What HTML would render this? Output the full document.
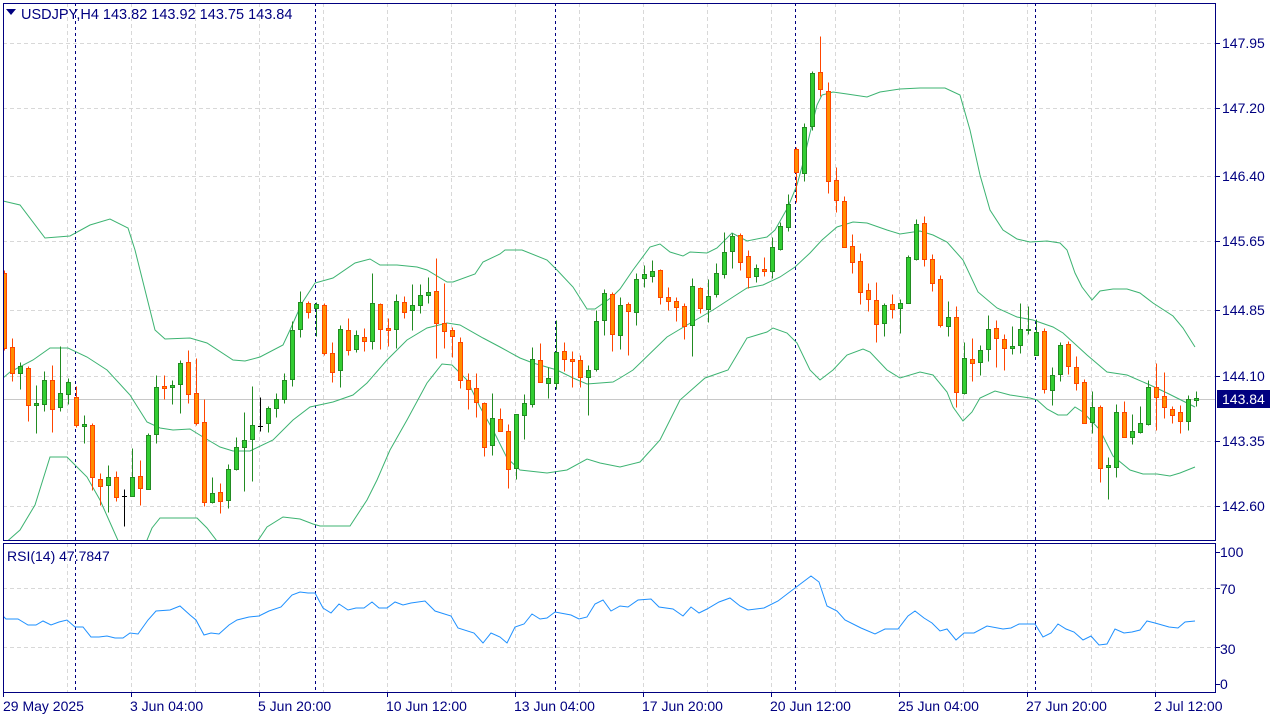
<!DOCTYPE html>
<html><head><meta charset="utf-8"><style>
html,body{margin:0;padding:0;background:#fff;width:1280px;height:720px;overflow:hidden}
svg{display:block}
text{font-family:"Liberation Sans",sans-serif;font-size:14px;fill:#000080}
.g{stroke:#228b22;fill:#32cd32;stroke-width:1}
.r{stroke:#ff4500;fill:#ff8c00;stroke-width:1}
.k{stroke:#000;fill:none;stroke-width:1}
.grid{stroke:#d8d8d8;stroke-width:1;stroke-dasharray:4 3;fill:none}
.sep{stroke:#000080;stroke-width:1;stroke-dasharray:3 3;fill:none}
.band{stroke:#3cb371;stroke-width:1;fill:none}
</style></head><body>
<svg width="1280" height="720" viewBox="0 0 1280 720" xmlns="http://www.w3.org/2000/svg">
<defs>
<clipPath id="cm"><rect x="3" y="3" width="1213" height="537"/></clipPath>
<clipPath id="cr"><rect x="3" y="543" width="1213" height="149"/></clipPath>
</defs>
<g class="grid">
<path d="M3 43.5H1216M3 108.5H1216M3 176.5H1216M3 241.5H1216M3 310.5H1216M3 376.5H1216M3 441.5H1216M3 506.5H1216"/>
<path d="M3 588.5H1216M3 647.5H1216"/>
<path d="M67.5 3V540M131.5 3V540M195.5 3V540M259.5 3V540M323.5 3V540M387.5 3V540M451.5 3V540M515.5 3V540M579.5 3V540M643.5 3V540M707.5 3V540M771.5 3V540M835.5 3V540M899.5 3V540M963.5 3V540M1027.5 3V540M1091.5 3V540M1155.5 3V540"/>
<path d="M67.5 543V692M131.5 543V692M195.5 543V692M259.5 543V692M323.5 543V692M387.5 543V692M451.5 543V692M515.5 543V692M579.5 543V692M643.5 543V692M707.5 543V692M771.5 543V692M835.5 543V692M899.5 543V692M963.5 543V692M1027.5 543V692M1091.5 543V692M1155.5 543V692"/>
</g>
<path d="M3 399.5H1216" stroke="#c8c8c8" stroke-width="1"/>
<g class="sep"><path d="M75.5 3V692M315.5 3V692M555.5 3V692M795.5 3V692M1035.5 3V692"/></g>

<g clip-path="url(#cm)">
<polyline class="band" points="3,201 20,205 45,238 70,236 90,225 110,219 128,228 135,250 155,330 165,339 190,338 207,343 233,360 245,361 260,357 283,345 290,330 302,303 315,283 333,278 355,263 370,259 380,265 397,265 417,267 427,270 447,282 453,282 475,274 483,262 500,254 505,250 522,250 547,260 557,270 573,287 587,309 595,309 612,297 620,289 633,270 650,247 660,244 670,252 683,256 690,252 707,253 717,248 732,233 747,241 767,237 775,230 788,207 797,185 803,163 810,133 817,105 822,95 833,92 847,94 867,97 880,92 900,89 920,88 945,88 960,95 970,130 980,175 990,210 1003,230 1017,239 1030,242 1047,241 1060,243 1067,250 1075,273 1082,287 1092,300 1100,291 1113,289 1127,289 1140,293 1153,303 1173,316 1183,328 1195,347"/>
<polyline class="band" points="3,378 10,372 33,360 50,348 68,348 87,357 107,370 130,395 147,422 160,428 173,430 190,429 203,437 220,447 233,451 250,451 273,440 293,420 310,407 333,402 353,395 367,383 387,360 407,340 427,328 447,323 460,325 483,338 500,347 520,358 533,363 557,370 573,378 587,384 600,383 613,382 620,378 633,370 667,337 687,325 713,310 733,297 747,288 763,285 780,277 795,267 810,253 822,240 837,227 853,222 867,223 887,230 900,234 920,231 933,235 947,242 963,260 978,292 997,308 1017,317 1033,320 1053,327 1063,333 1087,355 1107,372 1127,375 1150,385 1167,393 1195,407"/>
<polyline class="band" points="3,545 20,530 35,505 50,457 67,457 77,467 87,477 100,500 112,527 120,545 145,545 152,528 160,518 173,518 197,518 207,528 220,545 255,545 267,527 283,517 300,519 313,524 320,526 350,526 367,500 377,480 390,450 407,420 427,383 442,364 452,365 467,380 480,407 493,430 507,458 520,470 547,473 567,470 587,459 600,463 620,467 640,462 660,440 680,400 705,378 728,370 747,338 767,332 773,328 787,333 797,343 810,370 820,380 833,370 847,355 863,349 870,352 887,370 900,378 920,372 933,375 947,392 953,407 963,421 972,412 980,398 995,391 1010,395 1030,398 1037,400 1047,409 1058,415 1067,415 1075,407 1083,412 1100,430 1113,456 1130,470 1143,474 1157,474 1170,476 1180,473 1195,467"/>

<g transform="translate(0,0.5)">
<g class="g">
<path d="M20.5 362V389M36.5 385V433M44.5 371V411M60.5 346V411M68.5 378V404M84.5 415V443M108.5 465V512M132.5 448V496M148.5 433V489M156.5 375V443M172.5 380V404M180.5 360V413M212.5 477V503M228.5 464V508M236.5 437V470M244.5 412V491M252.5 386V481M268.5 406V432M276.5 393V417M284.5 373V403M292.5 321V386M300.5 291V337M316.5 302V336M340.5 325V387M356.5 330V352M372.5 273V349M396.5 294V348M412.5 284V330M420.5 284V313M428.5 277V303M492.5 393V455M516.5 414V479M524.5 394V439M532.5 347V407M548.5 367V398M556.5 320V389M588.5 365V415M596.5 310V371M604.5 289V335M620.5 297V349M636.5 273V325M644.5 265V287M652.5 260V282M692.5 278V356M708.5 279V322M716.5 263V297M724.5 232V278M732.5 233V268M756.5 264V282M772.5 237V278M780.5 222V250M788.5 194V231M804.5 123V181M812.5 71V130M884.5 303V336M900.5 299V333M908.5 255V303M916.5 219V260M948.5 301V336M964.5 342V394M980.5 345V375M988.5 315V361M1012.5 326V354M1020.5 303V353M1028.5 306V334M1036.5 319V355M1052.5 367V405M1060.5 342V381M1092.5 391V433M1108.5 457V499M1116.5 404V477M1132.5 414V444M1140.5 406V433M1148.5 380V425M1188.5 395V430M1196.5 391V406"/>
<rect x="18.5" y="366" width="4" height="7"/><rect x="34.5" y="403" width="4" height="2"/><rect x="42.5" y="380" width="4" height="24"/><rect x="58.5" y="393" width="4" height="14"/><rect x="66.5" y="382" width="4" height="12"/><rect x="82.5" y="424" width="4" height="2"/><rect x="106.5" y="477" width="4" height="8"/><rect x="130.5" y="477" width="4" height="19"/><rect x="146.5" y="435" width="4" height="54"/><rect x="154.5" y="387" width="4" height="47"/><rect x="170.5" y="385" width="4" height="2"/><rect x="178.5" y="363" width="4" height="21"/><rect x="210.5" y="493" width="4" height="9"/><rect x="226.5" y="469" width="4" height="31"/><rect x="234.5" y="447" width="4" height="22"/><rect x="242.5" y="440" width="4" height="7"/><rect x="250.5" y="425" width="4" height="14"/><rect x="266.5" y="408" width="4" height="15"/><rect x="274.5" y="399" width="4" height="9"/><rect x="282.5" y="380" width="4" height="19"/><rect x="290.5" y="330" width="4" height="49"/><rect x="298.5" y="302" width="4" height="27"/><rect x="314.5" y="304" width="4" height="4"/><rect x="338.5" y="329" width="4" height="41"/><rect x="354.5" y="335" width="4" height="14"/><rect x="370.5" y="303" width="4" height="38"/><rect x="394.5" y="301" width="4" height="28"/><rect x="410.5" y="305" width="4" height="5"/><rect x="418.5" y="295" width="4" height="10"/><rect x="426.5" y="292" width="4" height="3"/><rect x="490.5" y="418" width="4" height="27"/><rect x="514.5" y="414" width="4" height="54"/><rect x="522.5" y="403" width="4" height="12"/><rect x="530.5" y="359" width="4" height="45"/><rect x="546.5" y="378" width="4" height="5"/><rect x="554.5" y="352" width="4" height="31"/><rect x="586.5" y="370" width="4" height="7"/><rect x="594.5" y="321" width="4" height="48"/><rect x="602.5" y="293" width="4" height="27"/><rect x="618.5" y="305" width="4" height="30"/><rect x="634.5" y="279" width="4" height="33"/><rect x="642.5" y="274" width="4" height="4"/><rect x="650.5" y="271" width="4" height="5"/><rect x="690.5" y="286" width="4" height="39"/><rect x="706.5" y="296" width="4" height="13"/><rect x="714.5" y="273" width="4" height="21"/><rect x="722.5" y="252" width="4" height="22"/><rect x="730.5" y="236" width="4" height="15"/><rect x="754.5" y="268" width="4" height="8"/><rect x="770.5" y="247" width="4" height="24"/><rect x="778.5" y="226" width="4" height="23"/><rect x="786.5" y="204" width="4" height="23"/><rect x="802.5" y="127" width="4" height="46"/><rect x="810.5" y="73" width="4" height="53"/><rect x="882.5" y="305" width="4" height="18"/><rect x="898.5" y="303" width="4" height="5"/><rect x="906.5" y="257" width="4" height="46"/><rect x="914.5" y="224" width="4" height="35"/><rect x="946.5" y="317" width="4" height="9"/><rect x="962.5" y="358" width="4" height="35"/><rect x="978.5" y="350" width="4" height="12"/><rect x="986.5" y="329" width="4" height="20"/><rect x="1010.5" y="346" width="4" height="2"/><rect x="1018.5" y="329" width="4" height="16"/><rect x="1026.5" y="329" width="4" height="1"/><rect x="1034.5" y="332" width="4" height="23"/><rect x="1050.5" y="375" width="4" height="15"/><rect x="1058.5" y="345" width="4" height="29"/><rect x="1090.5" y="407" width="4" height="15"/><rect x="1106.5" y="465" width="4" height="2"/><rect x="1114.5" y="412" width="4" height="55"/><rect x="1130.5" y="431" width="4" height="6"/><rect x="1138.5" y="423" width="4" height="9"/><rect x="1146.5" y="387" width="4" height="37"/><rect x="1186.5" y="399" width="4" height="22"/><rect x="1194.5" y="398" width="4" height="2"/>
</g>
<g class="r">
<path d="M4.5 270V350M12.5 338V381M28.5 366V421M52.5 365V432M76.5 386V427M92.5 423V490M100.5 473V505M116.5 471V501M140.5 460V505M164.5 375V399M188.5 350V403M196.5 358V425M204.5 399V506M220.5 483V513M308.5 301V318M324.5 303V355M332.5 342V382M348.5 318V355M364.5 328V351M380.5 303V349M388.5 318V346M404.5 296V318M436.5 258V358M444.5 283V348M452.5 327V357M460.5 337V388M468.5 373V409M476.5 373V417M484.5 402V456M500.5 408V431M508.5 424V488M540.5 343V382M564.5 342V371M572.5 351V387M580.5 355V387M612.5 292V351M628.5 302V355M660.5 269V304M668.5 287V310M676.5 297V321M684.5 303V339M700.5 287V313M740.5 233V270M748.5 250V288M764.5 257V276M796.5 147V202M820.5 36V96M828.5 82V193M836.5 167V212M844.5 196V247M852.5 234V273M860.5 253V304M868.5 283V311M876.5 282V342M892.5 294V318M924.5 216V266M932.5 254V291M940.5 275V327M956.5 306V407M972.5 338V381M996.5 320V367M1004.5 334V370M1044.5 328V393M1068.5 341V374M1076.5 356V390M1084.5 379V423M1100.5 405V482M1124.5 401V437M1156.5 363V430M1164.5 372V418M1172.5 406V423M1180.5 405V433"/>
<rect x="2.5" y="273" width="4" height="75"/><rect x="10.5" y="347" width="4" height="26"/><rect x="26.5" y="368" width="4" height="37"/><rect x="50.5" y="380" width="4" height="29"/><rect x="74.5" y="397" width="4" height="28"/><rect x="90.5" y="425" width="4" height="52"/><rect x="98.5" y="479" width="4" height="7"/><rect x="114.5" y="477" width="4" height="20"/><rect x="138.5" y="476" width="4" height="12"/><rect x="162.5" y="386" width="4" height="2"/><rect x="186.5" y="362" width="4" height="32"/><rect x="194.5" y="393" width="4" height="30"/><rect x="202.5" y="422" width="4" height="80"/><rect x="218.5" y="492" width="4" height="9"/><rect x="306.5" y="303" width="4" height="9"/><rect x="322.5" y="305" width="4" height="48"/><rect x="330.5" y="353" width="4" height="19"/><rect x="346.5" y="330" width="4" height="20"/><rect x="362.5" y="337" width="4" height="4"/><rect x="378.5" y="304" width="4" height="25"/><rect x="386.5" y="328" width="4" height="2"/><rect x="402.5" y="302" width="4" height="10"/><rect x="434.5" y="291" width="4" height="32"/><rect x="442.5" y="323" width="4" height="8"/><rect x="450.5" y="330" width="4" height="6"/><rect x="458.5" y="342" width="4" height="38"/><rect x="466.5" y="380" width="4" height="9"/><rect x="474.5" y="388" width="4" height="14"/><rect x="482.5" y="403" width="4" height="44"/><rect x="498.5" y="419" width="4" height="12"/><rect x="506.5" y="431" width="4" height="38"/><rect x="538.5" y="360" width="4" height="22"/><rect x="562.5" y="351" width="4" height="8"/><rect x="570.5" y="359" width="4" height="2"/><rect x="578.5" y="360" width="4" height="17"/><rect x="610.5" y="294" width="4" height="40"/><rect x="626.5" y="304" width="4" height="7"/><rect x="658.5" y="270" width="4" height="27"/><rect x="666.5" y="297" width="4" height="4"/><rect x="674.5" y="301" width="4" height="6"/><rect x="682.5" y="306" width="4" height="20"/><rect x="698.5" y="288" width="4" height="20"/><rect x="738.5" y="235" width="4" height="27"/><rect x="746.5" y="256" width="4" height="21"/><rect x="762.5" y="269" width="4" height="2"/><rect x="794.5" y="149" width="4" height="23"/><rect x="818.5" y="72" width="4" height="17"/><rect x="826.5" y="91" width="4" height="90"/><rect x="834.5" y="180" width="4" height="20"/><rect x="842.5" y="201" width="4" height="46"/><rect x="850.5" y="246" width="4" height="16"/><rect x="858.5" y="261" width="4" height="31"/><rect x="866.5" y="290" width="4" height="9"/><rect x="874.5" y="300" width="4" height="24"/><rect x="890.5" y="304" width="4" height="5"/><rect x="922.5" y="223" width="4" height="36"/><rect x="930.5" y="259" width="4" height="24"/><rect x="938.5" y="279" width="4" height="46"/><rect x="954.5" y="317" width="4" height="75"/><rect x="970.5" y="359" width="4" height="4"/><rect x="994.5" y="328" width="4" height="10"/><rect x="1002.5" y="339" width="4" height="9"/><rect x="1042.5" y="331" width="4" height="58"/><rect x="1066.5" y="344" width="4" height="22"/><rect x="1074.5" y="367" width="4" height="16"/><rect x="1082.5" y="382" width="4" height="41"/><rect x="1098.5" y="407" width="4" height="61"/><rect x="1122.5" y="412" width="4" height="25"/><rect x="1154.5" y="387" width="4" height="10"/><rect x="1162.5" y="396" width="4" height="11"/><rect x="1170.5" y="409" width="4" height="6"/><rect x="1178.5" y="412" width="4" height="9"/>
</g>
<g class="k"><path d="M124.5 489V526M122 496H127M260.5 397V431M258 426H263"/></g>
</g>
</g>

<g clip-path="url(#cr)">
<polyline fill="none" stroke="#1e90ff" stroke-width="1" points="3,616 6,619 18,619 28,625 36,625 43,621 51,625 59,622 67,620 75,627 83,627 91,637 99,637 107,636 115,638 123,638 130,633 138,634 148,620 156,611 170,610 180,606 190,615 196,620 204,635 211,633 219,634 229,625 237,620 249,617 259,616 269,611 281,607 292,595 300,592 308,593 315,593 323,608 331,613 339,604 348,610 356,608 364,608 372,602 379,608 387,608 395,602 403,605 411,603 425,601 435,611 451,616 458,628 474,633 483,643 491,633 500,637 507,643 515,627 524,624 532,614 540,619 547,618 555,612 571,615 579,619 587,617 595,604 603,600 611,611 620,606 628,607 638,600 651,599 659,607 673,609 683,616 691,607 699,613 707,609 719,602 730,598 740,606 748,610 764,608 778,601 795,588 811,576 819,582 827,606 837,611 845,620 861,628 875,634 885,629 898,629 908,616 915,611 924,618 932,623 940,631 947,629 956,640 964,633 974,633 987,626 1003,629 1011,628 1019,624 1035,624 1043,637 1051,633 1058,624 1066,629 1074,632 1083,640 1091,636 1099,645 1107,644 1115,629 1124,633 1132,632 1140,630 1147,621 1155,623 1169,627 1178,628 1185,622 1195,621"/>
</g>

<g stroke="#000080" stroke-width="1" fill="none">
<rect x="3.5" y="3.5" width="1212" height="537"/>
<rect x="3.5" y="543.5" width="1212" height="149"/>
<path d="M1216 43.5H1220M1216 108.5H1220M1216 176.5H1220M1216 241.5H1220M1216 310.5H1220M1216 376.5H1220M1216 441.5H1220M1216 506.5H1220"/>
<path d="M1216 552.5H1220M1216 588.5H1220M1216 647.5H1220M1216 684.5H1220"/>
<path d="M3.5 692V697M131.5 692V697M259.5 692V697M387.5 692V697M515.5 692V697M643.5 692V697M771.5 692V697M899.5 692V697M1027.5 692V697M1155.5 692V697"/>
</g>

<path d="M6 9H16L11 15Z" fill="#000080"/>
<text x="21" y="19" style="font-size:14.5px">USDJPY,H4  143.82 143.92 143.75 143.84</text>
<text x="7" y="561" style="font-size:14px">RSI(14) 47.7847</text>

<text x="1222" y="48">147.95</text>
<text x="1222" y="113">147.20</text>
<text x="1222" y="181">146.40</text>
<text x="1222" y="246">145.65</text>
<text x="1222" y="315">144.85</text>
<text x="1222" y="381">144.10</text>
<rect x="1217" y="390" width="53" height="18" fill="#000080"/>
<text x="1222" y="404" style="fill:#fff">143.84</text>
<text x="1222" y="446">143.35</text>
<text x="1222" y="511">142.60</text>
<text x="1220" y="557">100</text>
<text x="1220" y="594">70</text>
<text x="1220" y="654">30</text>
<text x="1220" y="689">0</text>

<text x="3" y="711">29 May 2025</text>
<text x="130" y="711">3 Jun 04:00</text>
<text x="258" y="711">5 Jun 20:00</text>
<text x="386" y="711">10 Jun 12:00</text>
<text x="514" y="711">13 Jun 04:00</text>
<text x="642" y="711">17 Jun 20:00</text>
<text x="770" y="711">20 Jun 12:00</text>
<text x="898" y="711">25 Jun 04:00</text>
<text x="1026" y="711">27 Jun 20:00</text>
<text x="1154" y="711">2 Jul 12:00</text>
</svg>
</body></html>
